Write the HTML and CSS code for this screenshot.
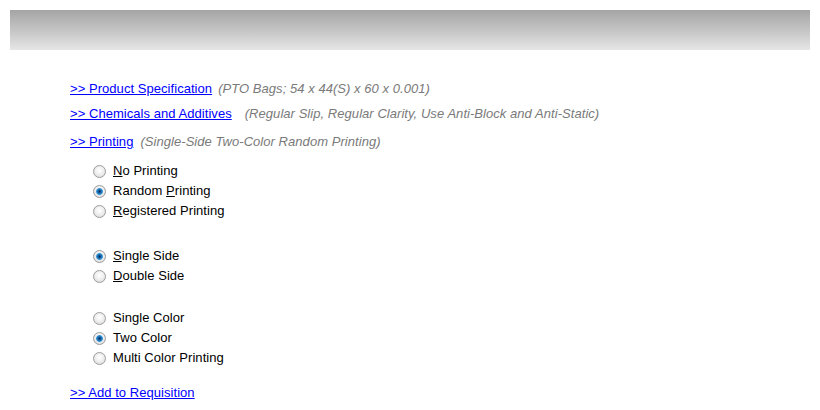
FILE: index.html
```html
<!DOCTYPE html>
<html>
<head>
<meta charset="utf-8">
<link rel="stylesheet" href="styles.css">
</head>
<body>
<div class="header"></div>
<div class="content">
  <div class="line l1"><a href="#">&gt;&gt; Product Specification</a><span class="note n1">(PTO Bags; 54 x 44(S) x 60 x 0.001)</span></div>
  <div class="line l2"><a href="#">&gt;&gt; Chemicals and Additives</a><span class="note n2">(Regular Slip, Regular Clarity, Use Anti-Block and Anti-Static)</span></div>
  <div class="line l3"><a href="#">&gt;&gt; Printing</a><span class="note n3">(Single-Side Two-Color Random Printing)</span></div>
  <div class="group g1">
    <label class="opt"><input type="radio" name="p"><span><u>N</u>o Printing</span></label>
    <label class="opt"><input type="radio" name="p" checked><span>Random <u>P</u>rinting</span></label>
    <label class="opt"><input type="radio" name="p"><span><u>R</u>egistered Printing</span></label>
  </div>
  <div class="group g2">
    <label class="opt"><input type="radio" name="s" checked><span><u>S</u>ingle Side</span></label>
    <label class="opt"><input type="radio" name="s"><span><u>D</u>ouble Side</span></label>
  </div>
  <div class="group g3">
    <label class="opt"><input type="radio" name="c"><span>Single Color</span></label>
    <label class="opt"><input type="radio" name="c" checked><span>Two Color</span></label>
    <label class="opt"><input type="radio" name="c"><span>Multi Color Printing</span></label>
  </div>
  <div class="line l4"><a href="#">&gt;&gt; Add to Requisition</a></div>
</div>
</body>
</html>
```
FILE: styles.css
```css
html, body {
  margin: 0;
  padding: 0;
  background: #ffffff;
}
body {
  padding: 10px;
  font-family: "Liberation Sans", Arial, sans-serif;
  font-size: 13px;
  letter-spacing: 0.05px;
  color: #000000;
}
.header {
  height: 40px;
  background: linear-gradient(to bottom, #a5a5a5 0%, #c4c4c4 50%, #e6e6e6 100%);
}
.content {
  padding: 29px 0 0 60px;
}
.line {
  height: 20px;
  line-height: 20px;
  white-space: nowrap;
}
.line a {
  color: #0000ff;
  text-decoration: underline;
}
.note {
  font-style: italic;
  color: #7a7a7a;
}
.n1 { margin-left: 6px; }
.n2 { margin-left: 13px; }
.n3 { margin-left: 7px; }
.l2 { margin-top: 5px; }
.l3 { margin-top: 8px; }
.group {
  display: flex;
  flex-direction: column;
  padding-left: 23px;
}
.g1 { margin-top: 9px; }
.g2 { margin-top: 25px; }
.g3 { margin-top: 22px; }
.l4 { margin-top: 15px; }
.opt {
  display: flex;
  align-items: center;
  height: 20px;
  line-height: 20px;
}
.opt input {
  -webkit-appearance: none;
  appearance: none;
  margin: 0 7px 0 0;
  width: 13px;
  height: 13px;
  border-radius: 50%;
  border: 1px solid #9c9c9c;
  box-sizing: border-box;
  background: radial-gradient(circle at 50% 40%, #ffffff 0%, #f2f2f2 40%, #d4d4d4 100%);
}
.opt input:checked {
  background:
    radial-gradient(circle at 50% 50%, #0a2a50 0px, #145f9e 1.5px, #3a95d8 3px, rgba(0,0,0,0) 3.8px),
    radial-gradient(circle at 50% 40%, #ffffff 0%, #f2f2f2 40%, #d4d4d4 100%);
}
.opt u {
  text-decoration: underline;
}
```
